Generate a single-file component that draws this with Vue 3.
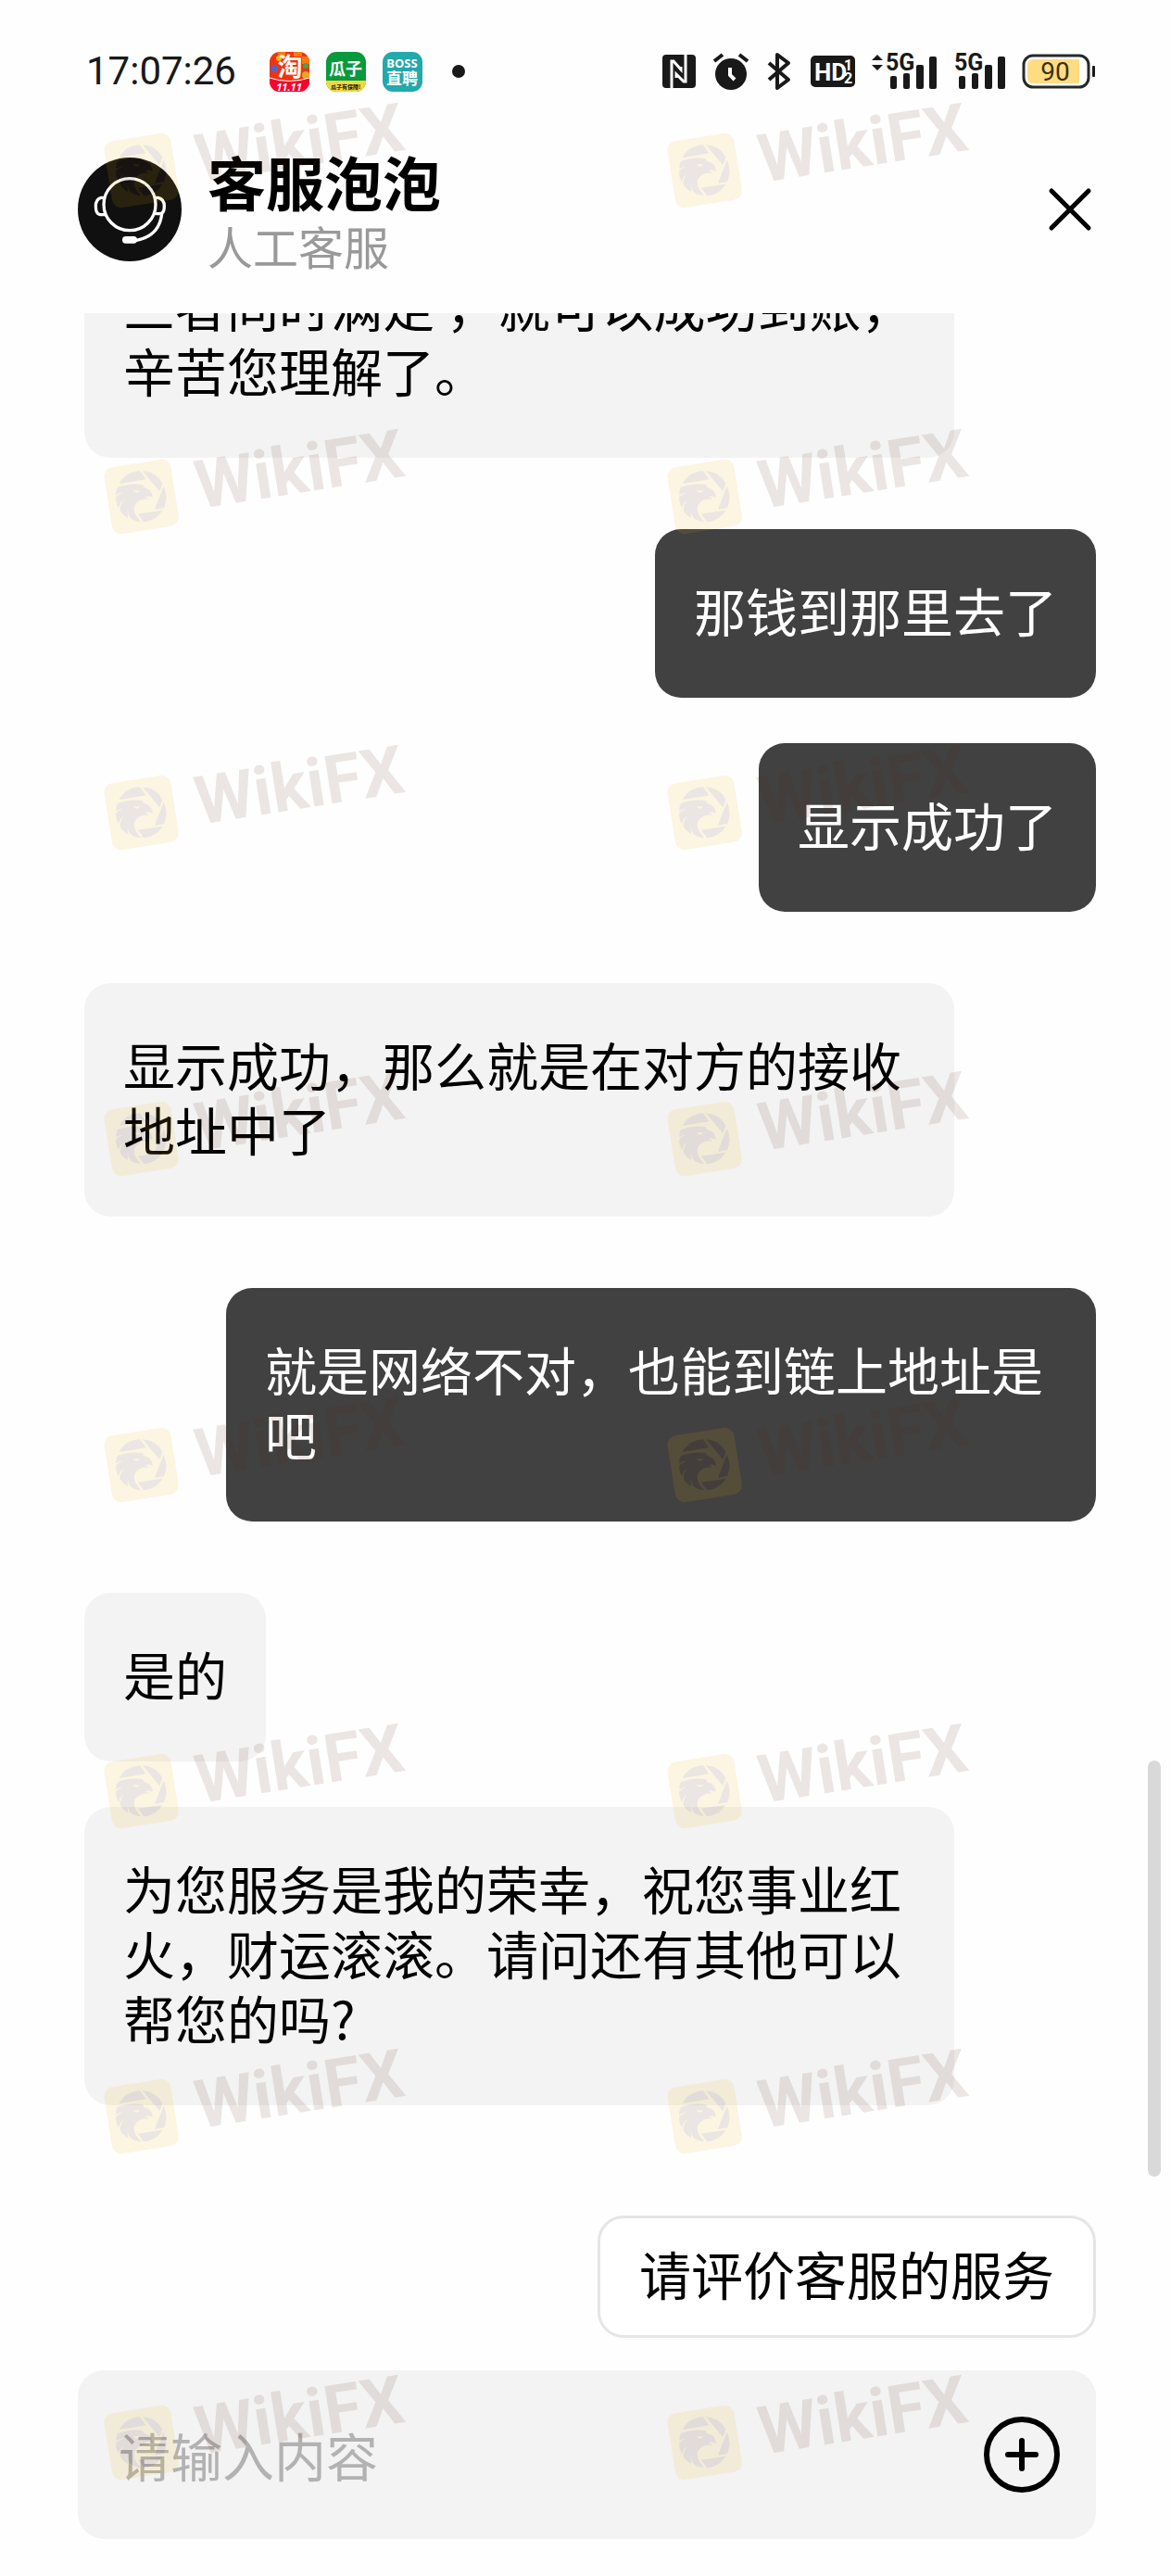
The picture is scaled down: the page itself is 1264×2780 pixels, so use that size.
<script setup>
import { ref } from 'vue'

const draft = ref('')

const messages = [
  { id: 1, side: 'agent', gap: 'none', text: '三者同时满足 ，就可以成功到账，辛苦您理解了。' },
  { id: 2, side: 'user', gap: 'wide', text: '那钱到那里去了' },
  { id: 3, side: 'user', gap: 'tight', text: '显示成功了' },
  { id: 4, side: 'agent', gap: 'wide', text: '显示成功，那么就是在对方的接收地址中了' },
  { id: 5, side: 'user', gap: 'wide', text: '就是网络不对，也能到链上地址是吧' },
  { id: 6, side: 'agent', gap: 'wide', text: '是的' },
  { id: 7, side: 'agent', gap: 'tight', text: '为您服务是我的荣幸，祝您事业红火，财运滚滚。请问还有其他可以帮您的吗?' },
]

const markRows = [110, 462, 803, 1155, 1507, 1859, 2210, 2562]
const markColumns = [112, 720]
const marks = markRows.flatMap((top) => markColumns.map((left) => ({ top, left })))
</script>

<template>
  <div class="page">
    <div class="status">
      <div class="status-group status-left">
        <time class="clock">17:07:26</time>
        <svg class="app" viewBox="0 0 43 43" aria-hidden="true">
          <defs>
            <clipPath id="tile"><rect width="43" height="43" rx="11" /></clipPath>
          </defs>
          <g clip-path="url(#tile)">
            <rect width="43" height="43" fill="#f0330f" />
            <path d="M9 0h8v6H9zM26 0h9v5h-9zM35 5h8v8h-8z" fill="#fb7a12" />
            <circle cx="10" cy="7" r="3" fill="#fdb515" />
            <circle cx="5" cy="18" r="4" fill="#5a62c8" />
            <circle cx="39" cy="15" r="3" fill="#3aa757" />
            <circle cx="39" cy="25" r="4" fill="#e9a62a" />
            <path d="M0 28q21 7 43 0v15H0z" fill="#f5052f" />
            <path d="M0 28q21 7 43 0" fill="none" stroke="#fff" stroke-width="1" />
          </g>
          <text x="22" y="26" class="glyph" font-size="27">淘</text>
          <text x="21" y="42" class="glyph latin" font-size="11" font-style="italic">11.11</text>
        </svg>
        <svg class="app" viewBox="0 0 43 43" aria-hidden="true">
          <g clip-path="url(#tile)">
            <rect width="43" height="43" fill="#089a3c" />
            <rect y="31" width="43" height="12" fill="#f0d93a" />
          </g>
          <text x="21" y="25" class="glyph" font-size="18">瓜子</text>
          <text x="21" y="40" class="glyph dark" font-size="6">瓜子有保障!</text>
        </svg>
        <svg class="app" viewBox="0 0 43 43" aria-hidden="true">
          <rect width="43" height="43" rx="11" fill="#22a9ac" />
          <text x="21" y="17" class="glyph latin" font-size="13">BOSS</text>
          <text x="21" y="35" class="glyph" font-size="17">直聘</text>
        </svg>
        <span class="more"></span>
      </div>

      <div class="status-group">
        <svg width="36" height="36" viewBox="0 0 36 36" aria-hidden="true">
          <rect width="36" height="36" rx="4" fill="#191919" />
          <path d="M10 36V7h2l8 9v-3M25 0v29h-2l-8-8v4" fill="none" stroke="#fff" stroke-width="3" />
        </svg>
        <svg width="40" height="40" viewBox="0 0 40 40" aria-hidden="true">
          <circle cx="20" cy="23" r="17" fill="#191919" />
          <path d="M2 9l9-7M38 9l-9-7" stroke="#191919" stroke-width="4" fill="none" />
          <path d="M19 16v8l5 5" stroke="#fff" stroke-width="4" fill="none" />
        </svg>
        <svg width="30" height="40" viewBox="0 0 30 40" aria-hidden="true">
          <path d="M3 11l21 18-12 9V2l12 9L3 29" fill="none" stroke="#191919" stroke-width="4" stroke-linejoin="round" />
        </svg>
        <svg width="48" height="34" viewBox="0 0 48 34" aria-hidden="true">
          <rect width="48" height="34" rx="5" fill="#191919" />
          <text x="4" y="27" class="narrow white" font-size="26">HD</text>
          <text x="36" y="16" class="narrow white" font-size="16">1</text>
          <text x="36" y="30" class="narrow white" font-size="16">2</text>
        </svg>
        <svg width="70" height="40" viewBox="0 0 70 40" aria-hidden="true">
          <path d="M0 8l6-6 6 6zM0 13l6 6 6-6z" fill="#191919" />
          <text x="15" y="19" class="narrow" font-size="25">5G</text>
          <g fill="#191919">
            <rect x="20" y="25" width="7" height="14" rx="2" />
            <rect x="34" y="22" width="7" height="17" rx="2" />
            <rect x="48" y="13" width="8" height="26" rx="2" />
            <rect x="62" y="4" width="8" height="35" rx="2" />
          </g>
        </svg>
        <svg width="56" height="40" viewBox="14 0 56 40" aria-hidden="true">
          <text x="15" y="19" class="narrow" font-size="25">5G</text>
          <g fill="#191919">
            <rect x="20" y="25" width="7" height="14" rx="2" />
            <rect x="34" y="22" width="7" height="17" rx="2" />
            <rect x="48" y="13" width="8" height="26" rx="2" />
            <rect x="62" y="4" width="8" height="35" rx="2" />
          </g>
        </svg>
        <svg width="80" height="38" viewBox="0 0 80 38" aria-hidden="true">
          <rect x="2" y="2" width="70" height="34" rx="10" fill="#fff" stroke="#262a26" stroke-width="3" />
          <path d="M62 6v26H12q-6 0-6-6V12q0-6 6-6z" fill="#fedc84" />
          <rect x="76" y="13" width="3" height="12" rx="1" fill="#191919" />
          <text x="36" y="29" class="level">90</text>
        </svg>
      </div>
    </div>

    <header class="header">
      <svg class="avatar" viewBox="72 120 336 336" aria-hidden="true">
        <circle cx="240" cy="288" r="168" fill="#101010" />
        <g fill="none" stroke="#fff" stroke-width="10" stroke-linecap="round">
          <circle cx="240" cy="272" r="84" />
          <path d="M158 250h-10q-18 4-18 28t14 27h18M322 250h10q20 4 20 28t-16 24h-10" />
          <path d="M344 302q-8 72-82 86" />
        </g>
        <rect x="216" y="375" width="48" height="23" rx="11" fill="#fff" />
      </svg>
      <div class="who">
        <h1 class="name">客服泡泡</h1>
        <p class="role">人工客服</p>
      </div>
      <button class="icon-button" type="button" aria-label="关闭">
        <svg width="56" height="56" viewBox="0 0 56 56" aria-hidden="true">
          <path d="M8 8l40 40M48 8L8 48" stroke="#000" stroke-width="5" stroke-linecap="round" />
        </svg>
      </button>
    </header>

    <main class="chat">
      <p v-for="m in messages" :key="m.id" class="bubble" :class="[m.side, m.gap]">{{ m.text }}</p>
      <button class="rate" type="button">请评价客服的服务</button>
      <span class="thumb"></span>
    </main>

    <form class="composer" @submit.prevent>
      <input v-model="draft" class="field" type="text" placeholder="请输入内容" aria-label="请输入内容" />
      <button class="icon-button" type="button" aria-label="更多">
        <svg width="82" height="82" viewBox="0 0 82 82" aria-hidden="true">
          <circle cx="41" cy="41" r="38" fill="none" stroke="#000" stroke-width="6" />
          <path d="M41 26v30M26 41h30" stroke="#000" stroke-width="6" stroke-linecap="round" />
        </svg>
      </button>
    </form>

    <div class="marks" aria-hidden="true">
      <svg
        v-for="(m, i) in marks"
        :key="i"
        class="mark"
        viewBox="155 67 1002 348"
        :style="{ top: m.top + 'px', left: m.left + 'px' }"
      >
        <rect x="168" y="180" width="218" height="218" rx="30" fill="#ebb200" transform="rotate(-9 277 289)" />
        <g fill="#582414">
          <path d="M205 247q20-38 67-41l19 27z" />
          <path d="M281 206q46 4 64 40l-9 26z" />
          <path d="M349 255q16 36 1 70l-30 5z" />
          <path d="M345 333q-18 32-60 38l-19-26z" />
          <path d="M202 258C225 250 256 245 281 251L285 260C302 262 313 275 313 291C303 286 294 287 287 289Q298 291 301 298C281 293 262 303 254 320C249 338 262 356 275 370C250 368 237 358 235 345L232 328L233 358C220 351 211 342 208 332C207 320 214 308 222 298C211 306 206 314 203 325C196 312 193 298 195 290Q204 281 217 276Q205 275 195 284Q194 266 202 258Z" />
          <text class="wordmark" transform="translate(464 328) rotate(-9)">WikiFX</text>
        </g>
        <path d="M250 267q14 3 22 0q-2 9-11 9q-8-1-11-9z" fill="#ebb200" />
      </svg>
    </div>
  </div>
</template>

<style>
body {
  margin: 0;
  background: #fefefe;
}
</style>

<style scoped>
.page {
  position: relative;
  display: flex;
  flex-direction: column;
  height: 100vh;
  overflow: hidden;
  background: #fefefe;
  color: #000;
  font-family: "Noto Sans CJK SC", sans-serif;
}

svg {
  overflow: visible;
}

.status {
  display: flex;
  align-items: center;
  justify-content: space-between;
  height: 154px;
  padding: 0 81px 0 93px;
  box-sizing: border-box;
  flex: none;
}

.status-group {
  display: flex;
  align-items: center;
  gap: 18px;
}

.clock {
  margin-right: 18px;
  font: 400 42px/56px Roboto, sans-serif;
  color: #191919;
}

.app {
  width: 43px;
  height: 43px;
}

.more {
  width: 14px;
  height: 14px;
  margin-left: 14px;
  border-radius: 50%;
  background: #191919;
}

.glyph {
  fill: #fff;
  font-weight: 700;
  text-anchor: middle;
}

.latin {
  font-family: "Noto Sans", sans-serif;
}

.dark {
  fill: #111;
}

.narrow {
  fill: #191919;
  font-family: "Liberation Sans Narrow", Roboto, sans-serif;
  font-weight: 700;
}

.white {
  fill: #fff;
}

.level {
  fill: #3b3008;
  font-family: Roboto, sans-serif;
  font-size: 28px;
  text-anchor: middle;
}

.header {
  display: flex;
  align-items: center;
  gap: 28px;
  height: 184px;
  padding: 0 81px 40px 84px;
  box-sizing: border-box;
  flex: none;
}

.avatar {
  width: 112px;
  height: 112px;
  flex: none;
}

.who {
  flex: 1;
  padding-top: 7px;
}

.name,
.role {
  margin: 0;
  line-height: 70px;
}

.name {
  font-size: 63px;
  font-weight: 700;
}

.role {
  font-size: 49px;
  color: #999;
}

.icon-button {
  display: flex;
  padding: 0;
  border: 0;
  background: none;
}

.chat {
  position: relative;
  display: flex;
  flex: 1;
  flex-direction: column;
  justify-content: flex-end;
  min-height: 0;
  padding: 0 81px 0 91px;
  overflow: hidden;
}

.bubble {
  flex: none;
  max-width: 939px;
  margin: 0;
  padding: 52px 42px 60px;
  box-sizing: border-box;
  border-radius: 28px;
  font-size: 56px;
  line-height: 70px;
}

.agent {
  align-self: flex-start;
  background: #f3f3f3;
}

.user {
  align-self: flex-end;
  background: #414141;
  color: #fff;
}

.wide {
  margin-top: 77px;
}

.tight {
  margin-top: 49px;
}

.rate {
  align-self: flex-end;
  flex: none;
  margin-top: 119px;
  padding: 24px 42px 32px;
  border: 3px solid #e5e5e5;
  border-radius: 28px;
  background: #fff;
  color: #000;
  font: 400 56px/70px "Noto Sans CJK SC", sans-serif;
}

.thumb {
  position: absolute;
  right: 11px;
  bottom: 174px;
  width: 14px;
  height: 449px;
  border-radius: 7px;
  background: #d9d9d9;
}

.composer {
  display: flex;
  align-items: center;
  flex: none;
  height: 182px;
  margin: 35px 81px 40px 84px;
  padding: 0 39px 0 44px;
  box-sizing: border-box;
  border-radius: 28px;
  background: #f3f3f3;
}

.field {
  flex: 1;
  min-width: 0;
  height: 84px;
  padding: 0;
  border: 0;
  outline: 0;
  background: none;
  font: 400 56px/84px "Noto Sans CJK SC", sans-serif;
}

.field::placeholder {
  color: #b2b2b2;
  opacity: 1;
}

.marks {
  position: absolute;
  inset: 0;
  overflow: hidden;
  pointer-events: none;
}

.mark {
  position: absolute;
  width: 334px;
  height: 116px;
  opacity: 0.11;
}

.wordmark {
  font-family: Roboto, sans-serif;
  font-size: 218px;
  font-weight: 700;
}
</style>
